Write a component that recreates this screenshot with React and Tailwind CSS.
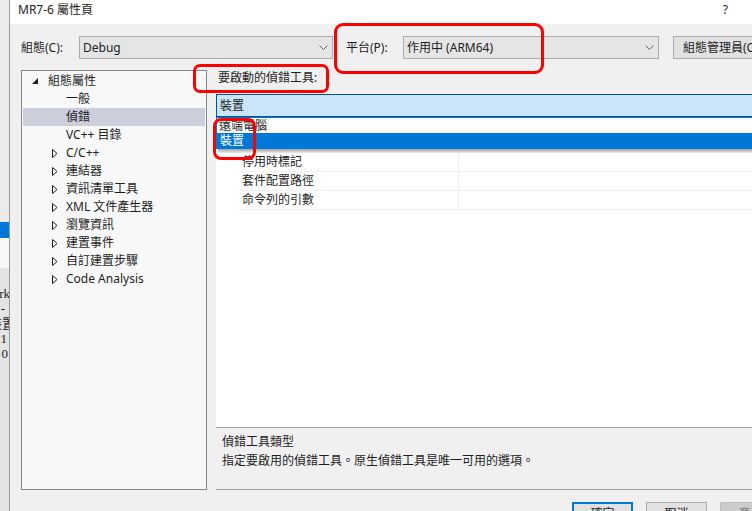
import React from "react";

const Chevron = () => (
  <svg width="9" height="5" viewBox="0 0 9 5" className="shrink-0">
    <path d="M0.5 0.5 L4.5 4.5 L8.5 0.5" fill="none" stroke="#606060" strokeWidth="1" />
  </svg>
);

const Expand = () => (
  <svg width="6" height="9" viewBox="0 0 6 9" className="shrink-0">
    <path d="M0.5 0.5 L5 4.5 L0.5 8.5 Z" fill="none" stroke="#1e1e1e" strokeWidth="1" strokeLinejoin="miter" />
  </svg>
);

const Expanded = () => (
  <svg width="6" height="6" viewBox="0 0 6 6" className="shrink-0">
    <path d="M6 0 L6 6 L0 6 Z" fill="#1e1e1e" />
  </svg>
);

const treeItems = [
  { t: "一般" },
  { t: "偵錯", sel: true },
  { t: "VC++ 目錄" },
  { t: "C/C++", exp: true },
  { t: "連結器", exp: true },
  { t: "資訊清單工具", exp: true },
  { t: "XML 文件產生器", exp: true },
  { t: "瀏覽資訊", exp: true },
  { t: "建置事件", exp: true },
  { t: "自訂建置步驟", exp: true },
  { t: "Code Analysis", exp: true },
];

const gridRows = ["停用時標記", "套件配置路徑", "命令列的引數"];

export default function App() {
  return (
    <div lang="zh-Hant-TW" className="relative w-[752px] h-[511px] overflow-hidden flex bg-[#f0f0f0] text-[12px] text-[#1e1e1e] font-['Noto_Sans','Noto_Sans_CJK_TC',sans-serif]">
      {/* background window strip */}
      <div className="w-[9px] shrink-0 flex flex-col overflow-hidden">
        <div className="h-[222px] bg-[#ebebeb]" />
        <div className="h-[16px] bg-[#0078d7]" />
        <div className="h-[30px] bg-[#f7f7f7]" />
        <div className="flex-1 bg-[#e4e4e4] pt-[18px] font-['Liberation_Serif','Noto_Sans_CJK_TC',serif] text-[13px] leading-[15px] text-[#222]">
          <div className="flex justify-end whitespace-nowrap mr-[-1px]">work</div>
          <div className="flex justify-end whitespace-nowrap mr-[4px]">-</div>
          <div className="flex justify-end whitespace-nowrap mr-[-6px]">裝置</div>
          <div className="flex justify-end whitespace-nowrap mr-[2px]">1</div>
          <div className="flex justify-end whitespace-nowrap mr-[1px]">0</div>
        </div>
      </div>

      {/* dialog */}
      <div className="flex-1 min-w-0 flex flex-col border-l border-[#9a9a9a] bg-[#f0f0f0]">
        {/* title bar */}
        <div className="h-[24px] shrink-0 bg-white flex items-start justify-between pl-[8px] pr-[24px] pt-[1px] leading-[17px]">
          <span>MR7-6 屬性頁</span>
          <span>?</span>
        </div>

        {/* toolbar */}
        <div className="mt-[12px] h-[23px] shrink-0 flex items-center pl-[11px] overflow-hidden">
          <span className="w-[58px] shrink-0">組態(C):</span>
          <div className="w-[254px] h-[23px] shrink-0 border border-[#acacac] bg-[#e5e5e5] flex items-center justify-between pl-[3px] pr-[4px]">
            <span>Debug</span>
            <Chevron />
          </div>
          <span className="ml-[13px] w-[57px] shrink-0">平台(P):</span>
          <div className="w-[256px] h-[23px] shrink-0 border border-[#acacac] bg-[#e5e5e5] flex items-center justify-between pl-[3px] pr-[4px]">
            <span>作用中 (ARM64)</span>
            <Chevron />
          </div>
          <div className="ml-[14px] w-[110px] h-[23px] shrink-0 border border-[#adadad] bg-[#e1e1e1] flex items-center pl-[9px] whitespace-nowrap">
            組態管理員(C)
          </div>
        </div>

        {/* main */}
        <div className="mt-[11px] h-[420px] shrink-0 flex pl-[11px]">
          {/* tree */}
          <div className="w-[186px] shrink-0 border border-[#828790] bg-[#f8f8f8] pt-[1px] flex flex-col leading-[18px]">
            <div className="h-[18px] flex items-center pl-[10px]">
              <Expanded />
              <span className="ml-[10px]">組態屬性</span>
            </div>
            {treeItems.map((it) => (
              <div
                key={it.t}
                className={
                  "h-[18px] flex items-center mx-[1px] " +
                  (it.exp ? "pl-[29px]" : "pl-[43px]") +
                  (it.sel ? " bg-[#cccedb]" : "")
                }
              >
                {it.exp && <Expand />}
                <span className={it.exp ? "ml-[8px]" : ""}>{it.t}</span>
              </div>
            ))}
          </div>

          {/* right */}
          <div className="ml-[9px] flex-1 min-w-0 flex flex-col">
            <div className="h-[24px] shrink-0 pl-[2px] leading-[16px] whitespace-nowrap">要啟動的偵錯工具:</div>

            {/* grid */}
            <div className="h-[333px] shrink-0 bg-white flex flex-col overflow-hidden">
              <div className="h-[23px] shrink-0 bg-[#cce4f7] border border-r-0 border-[#005499] flex items-center pl-[3px]">
                裝置
              </div>
              <div className="shrink-0 border-l border-t border-[#0078d7] flex flex-col">
                <div className="h-[15px] flex items-center pl-[2px] bg-white">遠端電腦</div>
                <div className="h-[16px] flex items-center pl-[3px] bg-[#0078d7] text-white">裝置</div>
              </div>
              <div className="h-[4px] shrink-0 ml-[2px] bg-gradient-to-b from-[#a4a4a4] to-[#ededed]" />
              {gridRows.map((r) => (
                <div key={r} className="h-[19px] shrink-0 flex">
                  <div className="w-[22px] shrink-0" />
                  <div className="w-[221px] shrink-0 border-r border-b border-[#f0f0f0] flex items-center pl-[4px]">
                    {r}
                  </div>
                  <div className="flex-1 border-b border-[#f0f0f0]" />
                </div>
              ))}
            </div>

            {/* description */}
            <div className="h-[63px] shrink-0 border-t border-b border-[#a0a0a0] pl-[6px] pt-[4px] leading-[19px] whitespace-nowrap">
              <div>偵錯工具類型</div>
              <div>指定要啟用的偵錯工具。原生偵錯工具是唯一可用的選項。</div>
            </div>
          </div>
        </div>

        {/* buttons */}
        <div className="mt-[12px] h-[23px] shrink-0 flex pl-[562px] gap-[13px]">
          <div className="w-[61px] h-[23px] shrink-0 border-2 border-[#0078d7] bg-[#e1e1e1] flex items-center justify-center">確定</div>
          <div className="w-[61px] h-[23px] shrink-0 border border-[#adadad] bg-[#e1e1e1] flex items-center justify-center">取消</div>
          <div className="w-[61px] h-[23px] shrink-0 border border-[#bfbfbf] bg-[#cccccc] text-[#838383] flex items-center justify-center">套用</div>
        </div>
      </div>

      {/* red annotations */}
      <div className="absolute left-[334px] top-[23px] w-[210px] h-[51px] border-[3px] border-[#ff0000] rounded-[9px]" />
      <div className="absolute left-[193px] top-[64px] w-[136px] h-[29px] border-[3px] border-[#ff0000] rounded-[7px]" />
      <div className="absolute left-[213px] top-[118px] w-[43px] h-[42px] border-[3px] border-[#ff0000] rounded-[8px]" />
    </div>
  );
}
